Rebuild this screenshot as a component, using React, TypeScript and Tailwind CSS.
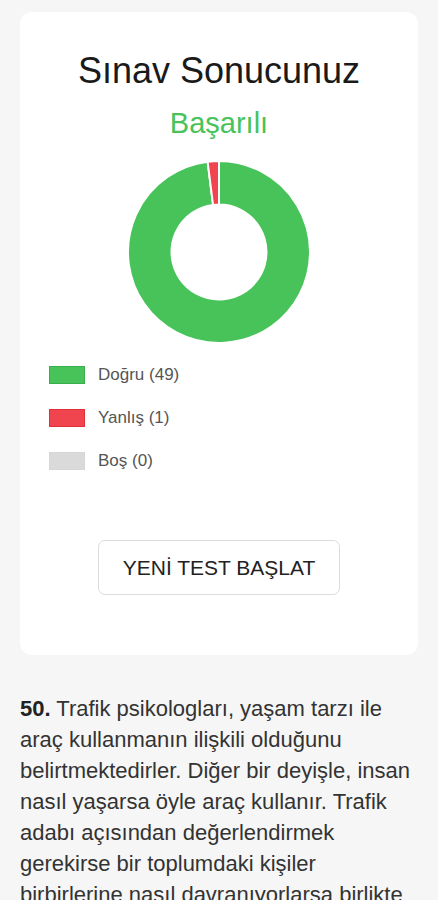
import React from "react";

function arcPath(cx: number, cy: number, R: number, r: number, a0: number, a1: number) {
  const rad = (d: number) => ((d - 90) * Math.PI) / 180;
  const p = (rr: number, a: number) => [cx + rr * Math.cos(rad(a)), cy + rr * Math.sin(rad(a))];
  const large = a1 - a0 > 180 ? 1 : 0;
  const [x0, y0] = p(R, a0);
  const [x1, y1] = p(R, a1);
  const [x2, y2] = p(r, a1);
  const [x3, y3] = p(r, a0);
  return `M${x0} ${y0} A${R} ${R} 0 ${large} 1 ${x1} ${y1} L${x2} ${y2} A${r} ${r} 0 ${large} 0 ${x3} ${y3} Z`;
}

function Donut() {
  const cx = 92, cy = 92, R = 91, r = 47.5;
  return (
    <svg width="184" height="184" viewBox="0 0 184 184">
      <path d={arcPath(cx, cy, R, r, 0, 352.8)} fill="#47c35a" stroke="#ffffff" strokeWidth="2" strokeLinejoin="miter" />
      <path d={arcPath(cx, cy, R, r, 352.8, 360)} fill="#f0454f" stroke="#ffffff" strokeWidth="2" strokeLinejoin="miter" />
    </svg>
  );
}

export default function App() {
  const legend = [
    { label: "Doğru (49)", box: "bg-[#47c35a] border-[#3aae4c]" },
    { label: "Yanlış (1)", box: "bg-[#f0454f] border-[#e0303a]" },
    { label: "Boş (0)", box: "bg-[#dadada] border-[#d6d6d6]" },
  ];
  const lines = [
    "araç kullanmanın ilişkili olduğunu",
    "belirtmektedirler. Diğer bir deyişle, insan",
    "nasıl yaşarsa öyle araç kullanır. Trafik",
    "adabı açısından değerlendirmek",
    "gerekirse bir toplumdaki kişiler",
    "birbirlerine nasıl davranıyorlarsa birlikte",
    "trafikte de öyle davranırlar.",
  ];
  return (
    <div className="min-h-[900px] bg-[#f6f6f6] px-5 pt-3 font-['Liberation_Sans',Arial,sans-serif]">
      <div className="rounded-[12px] bg-white pt-[39px] pb-[60px]">
        <h1 className="text-center text-[36px] leading-[40px] text-[#1a1a1a]">Sınav Sonucunuz</h1>
        <div className="mt-[16px] text-center text-[29px] leading-[32px] text-[#47c35a]">Başarılı</div>
        <div className="mt-[21px] flex justify-center">
          <Donut />
        </div>
        <div className="mt-[22px] flex flex-col gap-[25px] pl-[29px]">
          {legend.map((l) => (
            <div key={l.label} className="flex items-center gap-[13px]">
              <div className={`h-[18px] w-[36px] border ${l.box}`} />
              <span className="text-[17px] leading-[18px] text-[#555]">{l.label}</span>
            </div>
          ))}
        </div>
        <div className="mt-[70px] flex justify-center">
          <button className="h-[55px] w-[242px] rounded-[7px] border border-[#dcdcdc] bg-white text-[21px] text-[#222]">
            YENİ TEST BAŞLAT
          </button>
        </div>
      </div>
      <p className="mt-[38px] whitespace-nowrap text-[22px] leading-[31px] text-[#333]">
        <b className="text-[#222]">50.</b> Trafik psikologları, yaşam tarzı ile
        {lines.map((ln) => (
          <React.Fragment key={ln}>
            <br />
            {ln}
          </React.Fragment>
        ))}
      </p>
    </div>
  );
}
